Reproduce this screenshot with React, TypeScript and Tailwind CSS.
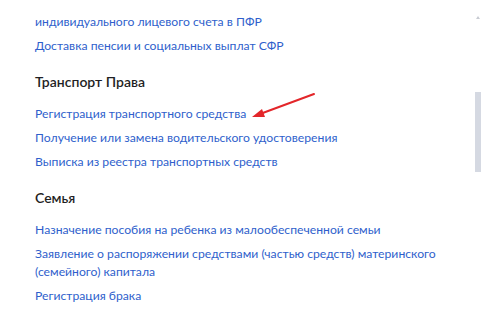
import React from 'react';

const sections: { title?: string; links: string[] }[] = [
  {
    links: [
      'индивидуального лицевого счета в ПФР',
      'Доставка пенсии и социальных выплат СФР',
    ],
  },
  {
    title: 'Транспорт Права',
    links: [
      'Регистрация транспортного средства',
      'Получение или замена водительского удостоверения',
      'Выписка из реестра транспортных средств',
    ],
  },
  {
    title: 'Семья',
    links: [
      'Назначение пособия на ребенка из малообеспеченной семьи',
      'Заявление о распоряжении средствами (частью средств) материнского (семейного) капитала',
      'Регистрация брака',
    ],
  },
];

export default function App() {
  return (
    <div className="relative w-[500px] h-[318px] overflow-hidden bg-white font-['Lato','Noto_Sans',sans-serif]">
      <div className="pl-[35px] pt-[13px] w-[460px]">
        {sections.map((section, i) => (
          <div key={i}>
            {section.title && (
              <h2 className="mt-[17px] mb-[13px] text-[14px] leading-[20px] font-semibold text-[#1f1f24]">
                {section.title}
              </h2>
            )}
            <div className="flex flex-col gap-[6px]">
              {section.links.map((link) => (
                <a
                  key={link}
                  href="#"
                  className="text-[12.2px] leading-[18px] text-[#2f5fcc] w-[415px]"
                >
                  {link}
                </a>
              ))}
            </div>
          </div>
        ))}
      </div>

      {/* scrollbar */}
      <div className="absolute left-[476px] top-[16px] w-0 h-0 border-x-[2px] border-b-[3px] border-x-transparent border-b-[#c8cbd2]" />
      <div className="absolute left-[475px] top-[92px] w-[6px] h-[80px] bg-[#d5d9e2]" />

      {/* red annotation arrow */}
      <svg
        className="absolute left-0 top-0"
        width="500"
        height="318"
        viewBox="0 0 500 318"
      >
        <line x1="314" y1="94" x2="260" y2="114" stroke="#e3262a" strokeWidth="2" strokeLinecap="round" />
        <polygon points="252,117 262,109 265,117" fill="#e3262a" />
      </svg>
    </div>
  );
}
